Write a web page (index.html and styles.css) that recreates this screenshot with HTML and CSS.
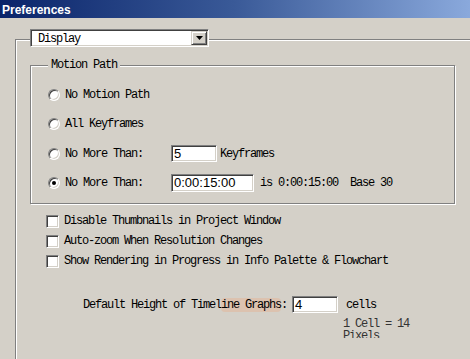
FILE: index.html
```html
<!DOCTYPE html>
<html>
<head>
<meta charset="utf-8">
<title>Preferences</title>
<link rel="stylesheet" href="styles.css">
</head>
<body>
<div class="titlebar"><span class="title">Preferences</span></div>
<div class="panel">
  <div class="combo">
    <span class="combo-text">Display</span>
    <span class="combo-btn"><svg width="7" height="4" viewBox="0 0 7 4"><path d="M0 0H7L3.5 4Z" fill="#000"/></svg></span>
  </div>

  <div class="group">
    <span class="legend">Motion Path</span>
    <div class="row"><span class="radio"></span><span class="lbl">No Motion Path</span></div>
    <div class="row"><span class="radio"></span><span class="lbl">All Keyframes</span></div>
    <div class="row"><span class="radio"></span><span class="lbl lbl-fixed">No More Than:</span><span class="field field-short">5</span><span class="after">Keyframes</span></div>
    <div class="row"><span class="radio radio-on"></span><span class="lbl lbl-fixed">No More Than:</span><span class="field field-time">0:00:15:00</span><span class="after after-wide">is 0:00:15:00  Base 30</span></div>
  </div>

  <div class="checks">
    <div class="check-row"><span class="checkbox"></span><span class="lbl">Disable Thumbnails in Project Window</span></div>
    <div class="check-row"><span class="checkbox"></span><span class="lbl">Auto-zoom When Resolution Changes</span></div>
    <div class="check-row"><span class="checkbox"></span><span class="lbl">Show Rendering in Progress in Info Palette &amp; Flowchart</span></div>
  </div>

  <div class="height-row">
    <span class="lbl">Default Height of Timel<span class="smudge">ine Graphs</span>:</span>
    <span class="field field-short field-h">4</span>
    <span class="lbl cells">cells</span>
  </div>
  <div class="note">1 Cell = 14 Pixels</div>
</div>
</body>
</html>
```

FILE: styles.css
```css
html, body {
  margin: 0;
  padding: 0;
}
body {
  width: 470px;
  height: 359px;
  overflow: hidden;
  background: #d4d0c8;
  font-family: "Liberation Mono", "DejaVu Sans Mono", monospace;
  font-size: 12px;
  color: #000;
}
.titlebar {
  height: 18px;
  background: linear-gradient(to right, #0a246a 0%, #3a5a98 50%, #8aa9dc 100%);
  display: flex;
  align-items: center;
}
.title {
  font-family: "Liberation Sans", Arial, sans-serif;
  font-weight: bold;
  font-size: 12px;
  color: #fff;
  padding-left: 2px;
  padding-top: 1px;
}
.panel {
  box-sizing: border-box;
  margin: 21px 0 0 15px;
  width: 455px;
  height: 320px;
  border-top: 1px solid #808080;
  border-left: 1px solid #808080;
  box-shadow: inset 1px 1px 0 #fff;
}
.lbl {
  letter-spacing: -1.2px;
  white-space: pre;
}
.combo {
  box-sizing: border-box;
  margin: -11px 0 0 14px;
  width: 179px;
  height: 18px;
  background: #fff;
  border: 1px solid;
  border-color: #808080 #fff #fff #808080;
  box-shadow: inset 1px 1px 0 #404040, inset -1px -1px 0 #d4d0c8;
  display: flex;
  align-items: center;
  justify-content: space-between;
  padding: 1px 1px 1px 7px;
}
.combo-text {
  letter-spacing: -1.2px;
  padding-top: 1px;
}
.combo-btn {
  box-sizing: border-box;
  width: 16px;
  height: 14px;
  background: #d4d0c8;
  border: 1px solid;
  border-color: #d4d0c8 #404040 #404040 #d4d0c8;
  box-shadow: inset 1px 1px 0 #fff, inset -1px -1px 0 #808080;
  display: flex;
  align-items: center;
  justify-content: center;
}
.group {
  position: relative;
  box-sizing: border-box;
  margin: 18px 0 0 14px;
  width: 425px;
  height: 139px;
  border: 1px solid #808080;
  box-shadow: 1px 1px 0 #fff, inset 1px 1px 0 #fff;
  padding-top: 14px;
}
.legend {
  position: absolute;
  top: -7px;
  left: 17px;
  padding: 0 3px;
  background: #d4d0c8;
  letter-spacing: -1.2px;
  line-height: 12px;
}
.row {
  display: flex;
  align-items: center;
  height: 29.5px;
}
.radio {
  box-sizing: border-box;
  position: relative;
  flex: none;
  width: 12px;
  height: 12px;
  margin: 0 5px 0 17px;
  border-radius: 50%;
  background: #fff;
  border: 1px solid;
  border-color: #808080 #fff #fff #808080;
  box-shadow: inset 1px 1px 0 #404040, inset -1px -1px 0 #d4d0c8;
}
.radio-on::after {
  content: "";
  position: absolute;
  left: 3px;
  top: 3px;
  width: 4px;
  height: 4px;
  border-radius: 50%;
  background: #000;
}
.lbl-fixed {
  width: 106px;
}
.field {
  box-sizing: border-box;
  height: 17px;
  background: #fff;
  border: 1px solid;
  border-color: #808080 #fff #fff #808080;
  box-shadow: inset 1px 1px 0 #404040, inset -1px -1px 0 #d4d0c8;
  font-family: "Liberation Sans", Arial, sans-serif;
  font-size: 13px;
  line-height: 15px;
  padding-left: 2px;
}
.field-short {
  width: 46px;
}
.field-time {
  width: 83px;
  height: 18px;
  line-height: 16px;
}
.after {
  margin-left: 3px;
  letter-spacing: -1.2px;
  white-space: pre;
}
.after-wide {
  margin-left: 6px;
}
.checks {
  margin-top: 7px;
}
.check-row {
  display: flex;
  align-items: center;
  height: 20px;
}
.checkbox {
  box-sizing: border-box;
  flex: none;
  width: 13px;
  height: 13px;
  margin: 0 5px 0 30px;
  background: #fff;
  border: 1px solid;
  border-color: #808080 #fff #fff #808080;
  box-shadow: inset 1px 1px 0 #404040, inset -1px -1px 0 #d4d0c8;
}
.height-row {
  display: flex;
  align-items: center;
  height: 17px;
  margin: 25px 0 0 67px;
}
.height-row .field {
  margin-left: 5px;
}
.smudge {
  background: rgba(235, 170, 130, 0.35);
  border-radius: 4px;
}
.cells {
  margin-left: 8px;
}
.note {
  margin: 5px 0 0 327px;
  width: 70px;
  height: 20px;
  overflow: hidden;
  line-height: 12px;
  letter-spacing: -1.2px;
  color: #333;
}
```
